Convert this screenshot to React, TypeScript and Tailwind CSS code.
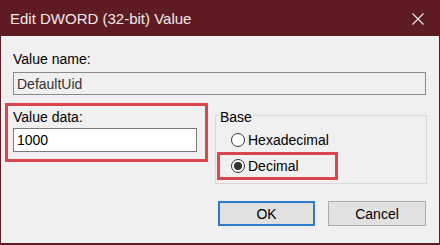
import React from "react";

const Radio = ({ checked }: { checked?: boolean }) => (
  <span className="relative inline-flex w-[14px] h-[14px] rounded-full border border-[#333333] bg-white items-center justify-center shrink-0">
    {checked && <span className="w-[8px] h-[8px] rounded-full bg-[#333333]" />}
  </span>
);

export default function App() {
  return (
    <div
      className="w-[440px] h-[245px] flex flex-col overflow-hidden text-[#000] bg-[#f0f0f0]"
      style={{ fontFamily: '"Liberation Sans", Arial, sans-serif' }}
    >
      {/* Title bar */}
      <div className="h-[36px] shrink-0 bg-[#5e1c22] flex items-center pl-[10px] pr-[16px] pt-[2px]">
        <span className="text-[15px] leading-[18px] text-[#f3e8e9] flex-1">Edit DWORD (32-bit) Value</span>
        <svg width="12" height="12" viewBox="0 0 12 12">
          <path d="M0.5 0.5 L11.5 11.5 M11.5 0.5 L0.5 11.5" stroke="#f3e8e9" strokeWidth="1.2" fill="none" />
        </svg>
      </div>
      {/* Body */}
      <div className="flex-1 flex flex-col border-l border-r border-b-2 border-[#5e1c22] pl-[12px] text-[14px] leading-[16px]">
        <div className="mt-[15px]">Value name:</div>
        <div className="mt-[5px] w-[413px] h-[23px] border border-[#8a8a8a] bg-[#f0f0f0] flex items-center pl-[3px] text-[#333]">
          DefaultUid
        </div>
        <div className="flex items-start mt-[8px]">
          {/* Value data red box */}
          <div className="ml-[-8px] w-[203px] h-[59px] border-[3px] border-[#d8474c] pl-[5px] pt-[3px] flex flex-col">
            <div>Value data:</div>
            <div className="mt-[3px] w-[184px] h-[24px] border border-[#7a7a7a] bg-white flex items-center pl-[3px]">
              1000
            </div>
          </div>
          {/* Base group */}
          <div className="relative ml-[7px] mt-[12px] w-[212px] h-[69px] border border-[#d8d8d8] flex flex-col">
            <span className="absolute left-[3px] top-[-7px] px-[1px] bg-[#f0f0f0]">Base</span>
            <div className="flex items-center mt-[16px] pl-[15px] gap-[3px]">
              <Radio />
              <span>Hexadecimal</span>
            </div>
            <div className="ml-[1px] mt-[4px] w-[121px] h-[28px] border-[3px] border-[#d8474c] flex items-center pl-[11px] gap-[3px]">
              <Radio checked />
              <span>Decimal</span>
            </div>
          </div>
        </div>
        <div className="flex mt-[17px] ml-[205px] gap-[13px]">
          <button className="w-[97px] h-[25px] border-2 border-[#2f7bd0] bg-[#e1e1e1] text-[14px] flex items-center justify-center">
            OK
          </button>
          <button className="w-[98px] h-[25px] border border-[#adadad] bg-[#e1e1e1] text-[14px] flex items-center justify-center">
            Cancel
          </button>
        </div>
      </div>
    </div>
  );
}
